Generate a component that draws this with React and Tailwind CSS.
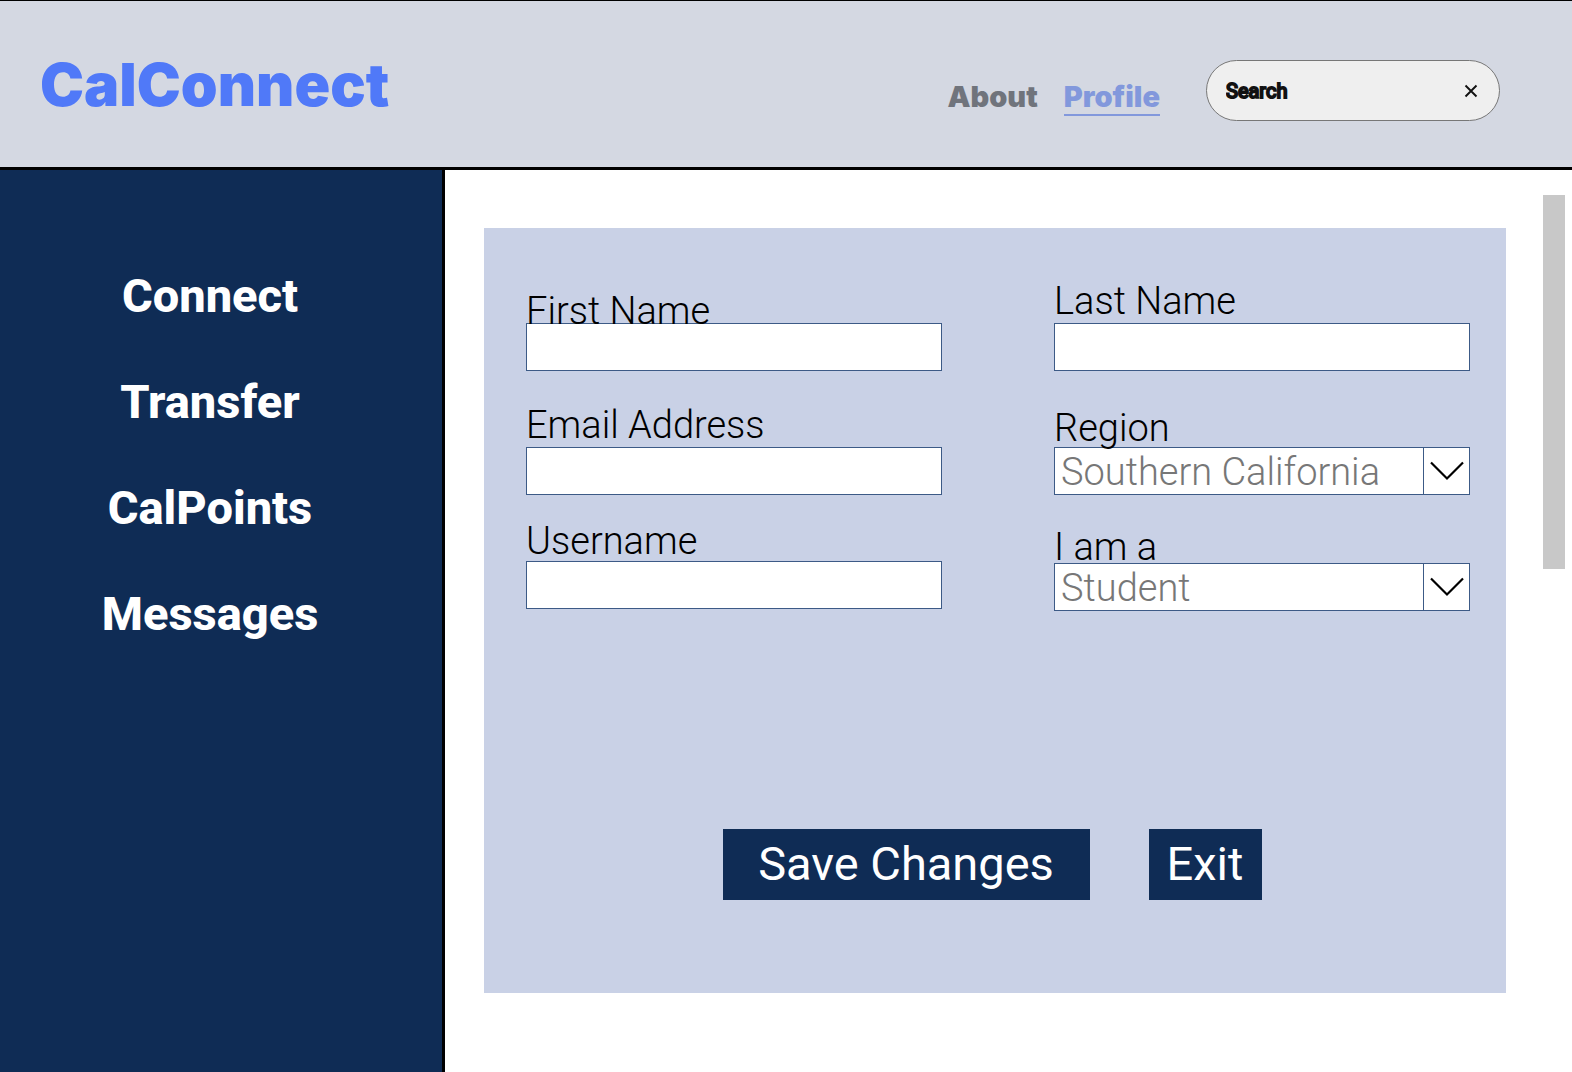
import { useState } from "react";

const navItems = ["Connect", "Transfer", "CalPoints", "Messages"];

const labelClass = "relative z-10 block h-8 text-[38px] leading-8 font-light text-black";
const fieldClass =
  "block h-12 w-full rounded-none border border-[#3c5a86] bg-white px-[6px] text-[38px] font-light text-[#777777] outline-none";

const TextField = ({ id, label, gap }) => {
  const [value, setValue] = useState("");

  return (
    <div>
      <label htmlFor={id} className={`${labelClass} ${gap}`}>
        {label}
      </label>
      <input
        id={id}
        type="text"
        value={value}
        onChange={(e) => setValue(e.target.value)}
        className={fieldClass}
      />
    </div>
  );
};

const SelectField = ({ id, label, gap, options }) => {
  const [value, setValue] = useState(options[0]);

  return (
    <div>
      <label htmlFor={id} className={`${labelClass} ${gap}`}>
        {label}
      </label>
      <div className="relative">
        <select
          id={id}
          value={value}
          onChange={(e) => setValue(e.target.value)}
          className={`${fieldClass} appearance-none pt-px leading-[46px]`}
        >
          {options.map((option) => (
            <option key={option}>{option}</option>
          ))}
        </select>
        <span className="pointer-events-none absolute inset-y-0 right-0 flex w-[47px] items-center justify-center border border-[#3c5a86]">
          <svg className="h-5 w-9" viewBox="0 0 36 20" fill="none" stroke="black" strokeWidth="2.2">
            <path d="M2 1.5l16 16L34 1.5" />
          </svg>
        </span>
      </div>
    </div>
  );
};

const Header = () => {
  const [query, setQuery] = useState("Search");

  return (
    <header className="flex h-[170px] shrink-0 items-start border-t border-b-3 border-black bg-[#d4d8e2] pr-[72px] pl-10 font-['Inter',sans-serif]">
      <h1 className="mt-12 text-[59px] leading-[72px] font-black text-[#5079f8]">
        CalConnect
      </h1>
      <nav className="mt-19 ml-auto flex gap-[26px] text-[29px] leading-10 font-black">
        <a href="#about" className="text-[#70747c]">
          About
        </a>
        <a href="#profile" className="h-[39px] border-b-2 border-[#8298dc] text-[#8298dc]">
          Profile
        </a>
      </nav>
      <div className="mt-[59px] ml-[46px] flex h-[61px] w-[294px] items-center rounded-full border border-[#777777] bg-[#efefef] pr-5 pl-[19px]">
        <input
          type="text"
          aria-label="Search"
          value={query}
          onChange={(e) => setQuery(e.target.value)}
          className="min-w-0 flex-1 bg-transparent font-['Roboto',sans-serif] text-[20px] text-[#111111] outline-none [-webkit-text-stroke:2px_#111111]"
        />
        <button type="button" aria-label="Clear" onClick={() => setQuery("")}>
          <svg className="h-4 w-4" viewBox="0 0 16 16" fill="none" stroke="#111111" strokeWidth="1.9">
            <path d="M2.5 2.5l11 11M13.5 2.5l-11 11" />
          </svg>
        </button>
      </div>
    </header>
  );
};

const App = () => {
  return (
    <div className="flex min-h-screen flex-col bg-white font-['Roboto',sans-serif]">
      <Header />
      <div className="flex flex-1">
        {/* Sidebar */}
        <aside className="w-[445px] shrink-0 border-r-3 border-black bg-[#0f2c55] pt-[98px] pr-[22px]">
          <nav className="flex flex-col items-center gap-[50px] text-[47px] leading-14 font-extrabold text-white">
            {navItems.map((item) => (
              <a key={item} href={`#${item.toLowerCase()}`}>
                {item}
              </a>
            ))}
          </nav>
        </aside>

        {/* Profile form */}
        <main className="flex min-w-0 flex-1 pr-[7px] pl-[39px]">
          <form
            onSubmit={(e) => e.preventDefault()}
            className="mt-[58px] mb-[79px] flex flex-1 flex-col bg-[#c9d1e6] pr-9 pl-[42px]"
          >
            <div className="grid grid-cols-2 gap-x-28 pt-[57px]">
              <div className="flex flex-col">
                <TextField id="first-name" label="First Name" gap="mt-[10px] -mb-1" />
                <TextField id="email" label="Email Address" gap="mt-[38px] mb-[6px]" />
                <TextField id="username" label="Username" gap="mt-[30px] mb-1" />
              </div>
              <div className="flex flex-col">
                <TextField id="last-name" label="Last Name" gap="mb-[6px]" />
                <SelectField
                  id="region"
                  label="Region"
                  gap="mt-[41px] mb-[3px]"
                  options={["Southern California", "Northern California"]}
                />
                <SelectField
                  id="role"
                  label="I am a"
                  gap="mt-9"
                  options={["Student", "Teacher"]}
                />
              </div>
            </div>
            <div className="mt-auto mb-[93px] flex justify-center gap-[59px] pr-3 text-[47px] text-white">
              <button type="submit" className="h-[71px] w-[367px] bg-[#0f2c55]">
                Save Changes
              </button>
              <button type="button" className="h-[71px] w-[113px] bg-[#0f2c55]">
                Exit
              </button>
            </div>
          </form>
          <div className="mt-[25px] ml-[37px] h-[374px] w-[22px] bg-[#c8c8c8]" />
        </main>
      </div>
    </div>
  );
};

export default App;
